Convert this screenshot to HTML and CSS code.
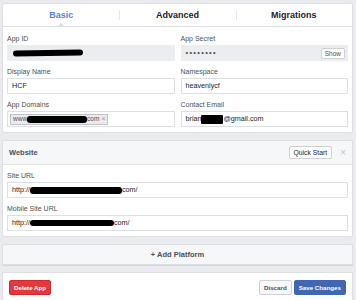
FILE: index.html
```html
<!DOCTYPE html>
<html lang="en">
<head>
    <meta charset="UTF-8">
    <title>App Settings</title>
    <link rel="stylesheet" href="styles.css">
</head>
<body>
    <div class="page">
        <div class="card basic">
            <div class="tabs">
                <div class="tab active">Basic</div>
                <div class="tab">Advanced</div>
                <div class="tab">Migrations</div>
            </div>
            <div class="grid">
                <div class="field">
                    <label>App ID</label>
                    <div class="input readonly"><span class="redact redact-id"></span></div>
                </div>
                <div class="field">
                    <label>App Secret</label>
                    <div class="input readonly">
                        <span class="dots">&bull;&bull;&bull;&bull;&bull;&bull;&bull;&bull;</span>
                        <button class="btn-small show-btn">Show</button>
                    </div>
                </div>
                <div class="field">
                    <label>Display Name</label>
                    <div class="input">HCF</div>
                </div>
                <div class="field">
                    <label>Namespace</label>
                    <div class="input">heavenlycf</div>
                </div>
                <div class="field">
                    <label>App Domains</label>
                    <div class="input">
                        <span class="tag">www<span class="redact redact-domain"></span>com <span class="tag-x">&times;</span></span>
                    </div>
                </div>
                <div class="field">
                    <label>Contact Email</label>
                    <div class="input">brian<span class="redact redact-mail"></span>@gmail.com</div>
                </div>
            </div>
        </div>

        <div class="card website">
            <div class="card-head">
                <span class="card-title">Website</span>
                <button class="btn-small">Quick Start</button>
                <span class="close">&times;</span>
            </div>
            <div class="card-body">
                <div class="field">
                    <label>Site URL</label>
                    <div class="input">http://<span class="redact redact-site"></span>com/</div>
                </div>
                <div class="field">
                    <label>Mobile Site URL</label>
                    <div class="input">http://<span class="redact redact-mobile"></span>com/</div>
                </div>
            </div>
        </div>

        <div class="card add-platform">+ Add Platform</div>

        <div class="card footer">
            <button class="btn btn-red">Delete App</button>
            <div class="footer-right">
                <button class="btn btn-white">Discard</button>
                <button class="btn btn-blue">Save Changes</button>
            </div>
        </div>
    </div>
</body>
</html>
```

FILE: styles.css
```css
* {
    box-sizing: border-box;
    margin: 0;
    padding: 0;
}

body {
    background: #e9ebee;
    font-family: 'Liberation Sans', Arial, sans-serif;
    color: #1d2129;
}

.page {
    padding: 3px 3px 0 2px;
    display: flex;
    flex-direction: column;
    gap: 7px;
}

.card {
    background: #fff;
    border: 1px solid #dddfe2;
    border-radius: 2px;
}

/* Tabs */
.tabs {
    display: flex;
    height: 23px;
    border-bottom: 1px solid #dddfe2;
}

.tab {
    flex: 1;
    display: flex;
    align-items: center;
    justify-content: center;
    font-size: 9px;
    font-weight: bold;
    color: #1d2129;
    position: relative;
}

.tab + .tab::before {
    content: '';
    position: absolute;
    left: 0;
    top: 6px;
    bottom: 6px;
    border-left: 1px solid #e5e6e9;
}

.tab.active {
    color: #5b7fd6;
}

.tab.active::after {
    content: '';
    position: absolute;
    bottom: -1px;
    left: 50%;
    margin-left: -4px;
    border: 4px solid transparent;
    border-bottom-color: #dddfe2;
    border-top: none;
}

/* Fields */
.grid {
    display: grid;
    grid-template-columns: 1fr 1fr;
    column-gap: 6px;
    row-gap: 5px;
    padding: 6px 4px 5px 4px;
}

.field label {
    display: block;
    font-size: 7px;
    line-height: 12px;
    color: #4b4f56;
}

.input {
    height: 16px;
    border: 1px solid #dddfe2;
    background: #fff;
    font-size: 7.2px;
    line-height: 14px;
    padding: 0 4px;
    display: flex;
    align-items: center;
    white-space: nowrap;
    color: #1d2129;
}

.input.readonly {
    background: #ebedf0;
    border-color: #ebedf0;
}

.dots {
    flex: 1;
    font-size: 7.5px;
    letter-spacing: 1.3px;
    color: #4b4f56;
}

.redact {
    display: inline-block;
    background: #000;
    border-radius: 3px;
    height: 6px;
}

.redact-id {
    width: 70px;
    margin-left: 1px;
    transform: rotate(-1deg);
}

.redact-domain {
    width: 60px;
    height: 7px;
}

.redact-mail {
    width: 22px;
    height: 9px;
    border-radius: 1px;
}

.redact-site {
    width: 92px;
    height: 7px;
}

.redact-mobile {
    width: 84px;
    height: 6px;
}

.tag {
    display: inline-flex;
    align-items: center;
    height: 11px;
    padding: 0 2px;
    background: #e9ebee;
    border: 1px solid #bec3c9;
    font-size: 6.5px;
    color: #4b4f56;
    margin-left: -2px;
}

.tag-x {
    margin-left: 2px;
    color: #90949c;
    font-size: 7px;
}

.btn-small {
    font-family: inherit;
    font-size: 6.5px;
    color: #4b4f56;
    background: #fff;
    border: 1px solid #ced0d4;
    border-radius: 2px;
    height: 11px;
    padding: 0 3px;
}

.show-btn {
    margin-right: -2px;
}

/* Website */
.card-head {
    display: flex;
    align-items: center;
    height: 24px;
    background: #f6f7f9;
    border-bottom: 1px solid #e5e5e5;
    padding: 0 6px 0 6px;
}

.card-title {
    flex: 1;
    font-size: 7.5px;
    font-weight: bold;
    color: #4b4f56;
}

.card-head .btn-small {
    font-size: 6.8px;
    height: 13px;
    padding: 0 4px;
    color: #1d2129;
}

.close {
    margin-left: 8px;
    color: #bec3c9;
    font-size: 10px;
}

.card-body {
    padding: 5px 4px 5px 4px;
    display: flex;
    flex-direction: column;
    gap: 5px;
}

/* Add platform */
.add-platform {
    height: 21px;
    background: #f6f7f9;
    display: flex;
    align-items: center;
    justify-content: center;
    font-size: 7.5px;
    font-weight: bold;
    color: #4b4f56;
    box-shadow: 0 1px 1px rgba(0, 0, 0, 0.1);
}

/* Footer */
.footer {
    display: flex;
    justify-content: space-between;
    padding: 7px 6px 10px 6px;
    border-radius: 0;
}

.footer-right {
    display: flex;
    gap: 2px;
}

.btn {
    font-family: inherit;
    font-size: 6.2px;
    font-weight: bold;
    height: 15px;
    padding: 0 4px;
    border-radius: 2px;
    border: 1px solid;
}

.btn-red {
    background: #e0393e;
    border-color: #d0282d;
    color: #fff;
}

.btn-white {
    background: #f6f7f9;
    border-color: #ced0d4;
    color: #4b4f56;
}

.btn-blue {
    background: #4267b2;
    border-color: #4267b2;
    color: #fff;
}
```
